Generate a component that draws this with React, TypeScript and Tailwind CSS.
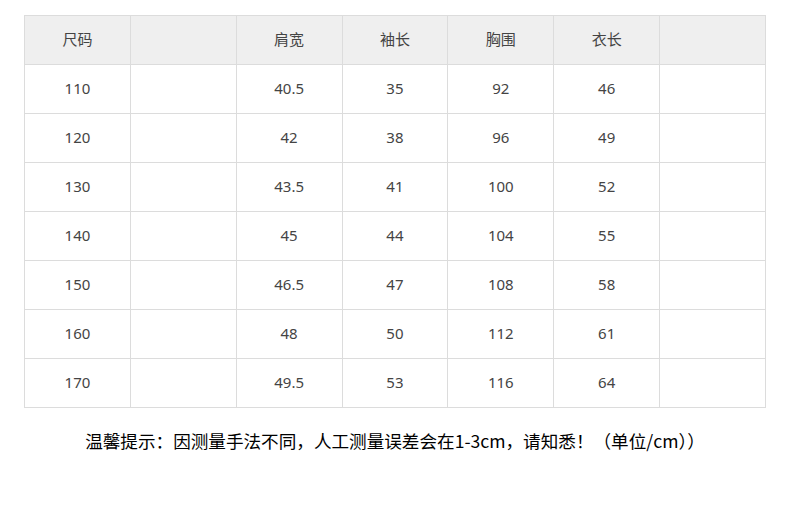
const headers = ["尺码", "", "肩宽", "袖长", "胸围", "衣长", ""];

const rows = [
  ["110", "", "40.5", "35", "92", "46", ""],
  ["120", "", "42", "38", "96", "49", ""],
  ["130", "", "43.5", "41", "100", "52", ""],
  ["140", "", "45", "44", "104", "55", ""],
  ["150", "", "46.5", "47", "108", "58", ""],
  ["160", "", "48", "50", "112", "61", ""],
  ["170", "", "49.5", "53", "116", "64", ""],
];

export default function App() {
  return (
    <div className="w-[790px] h-[512px] bg-white pt-[15px] font-['Noto_Sans','Noto_Sans_CJK_SC',sans-serif]">
      <table className="ml-[24px] w-[742px] table-fixed border-collapse text-[15px] text-[#444]">
        <thead>
          <tr className="h-[49px] bg-[#efefef]">
            {headers.map((h, i) => (
              <th key={i} className="border border-[#dcdcdc] font-normal text-center pb-[2px]">
                {h}
              </th>
            ))}
          </tr>
        </thead>
        <tbody>
          {rows.map((r) => (
            <tr key={r[0]} className="h-[49px]">
              {r.map((c, i) => (
                <td key={i} className="border border-[#dcdcdc] text-center pb-[1px]">
                  {c}
                </td>
              ))}
            </tr>
          ))}
        </tbody>
      </table>
      <p className="mt-[21px] text-center text-[17.6px] leading-[24px] text-black font-['Noto_Sans_CJK_SC',sans-serif]">
        温馨提示：因测量手法不同，人工测量误差会在1-3cm，请知悉！（单位/cm））
      </p>
    </div>
  );
}
